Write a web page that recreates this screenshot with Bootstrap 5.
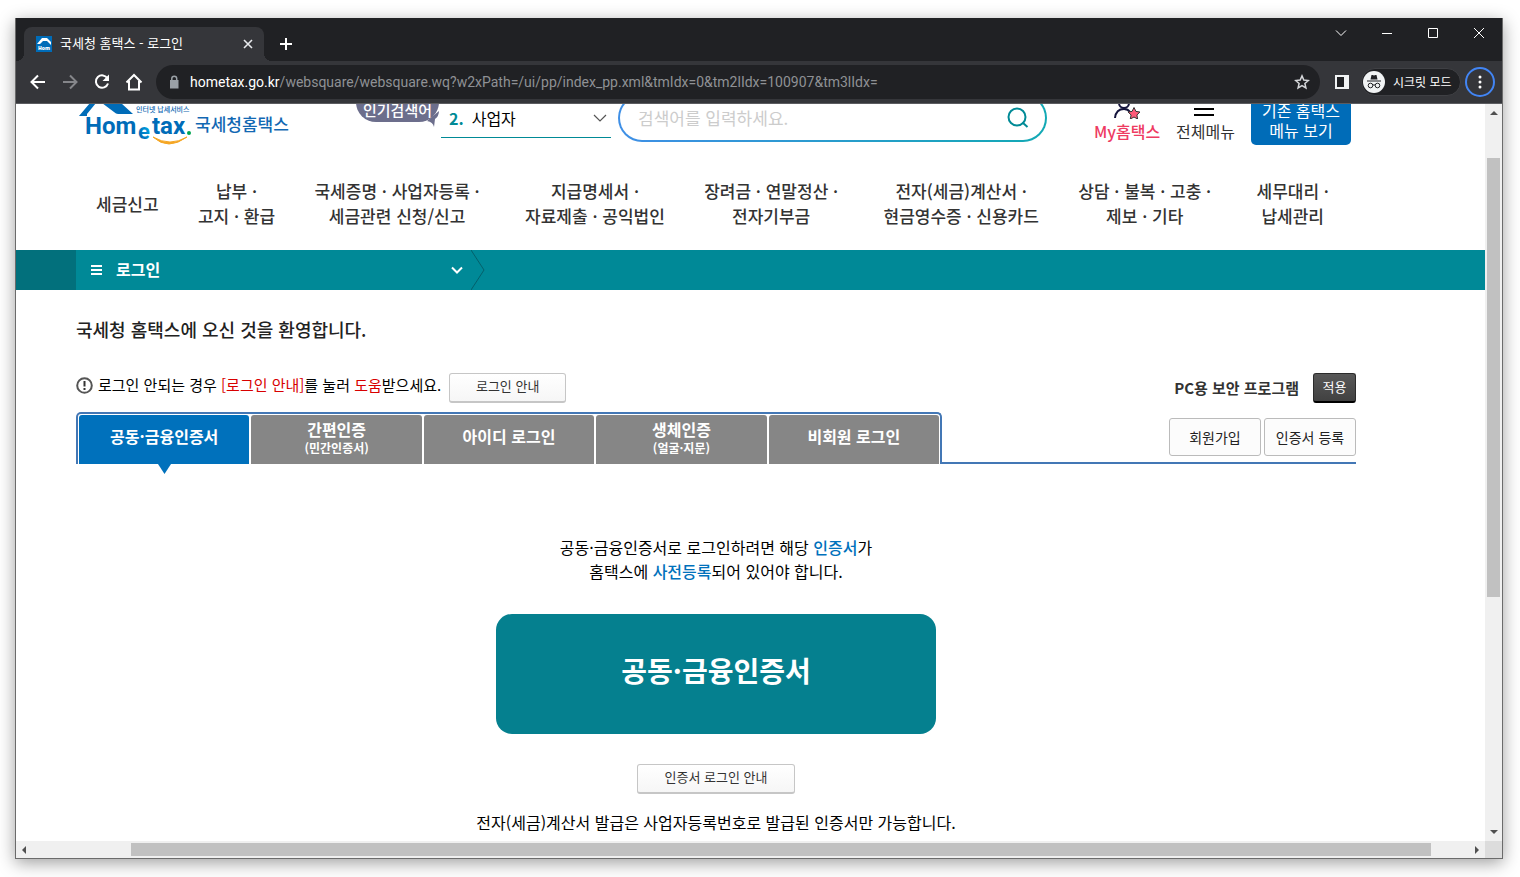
<!DOCTYPE html>
<html lang="ko">
<head>
<meta charset="utf-8">
<meta name="viewport" content="width=device-width, initial-scale=1">
<title>국세청 홈택스 - 로그인</title>
<link href="https://cdn.jsdelivr.net/npm/bootstrap@5.3.0/dist/css/bootstrap.min.css" rel="stylesheet">
<style>
  body { font-family: "Noto Sans CJK KR", "Noto Sans", sans-serif; font-size: 16px; line-height: 24px; color: #000; background: #fff; overflow: hidden; }
  button, input { font: inherit; }
  a { text-decoration: none; color: inherit; }
  svg { display: block; flex: none; }
  .desk { height: 100vh; padding: 18px 17px 18px 15px; }
  .win { border: 1px solid #6b6b6b; border-top: 0; box-shadow: 0 4px 16px rgba(0,0,0,.38); background: #fff; }
  .plain { border: 0; background: none; padding: 0; color: inherit; }

  /* browser chrome */
  .strip { background: #202124; height: 43px; padding-left: 8px; color: #fff; }
  .btab { width: 240px; height: 34px; background: #35363a; border-radius: 8px 8px 0 0; padding: 0 10px 0 12px; font-size: 13px; position: relative; }
  .btab span { padding-bottom: 2px; }
  .btab::before, .btab::after { content: ""; position: absolute; bottom: 0; width: 8px; height: 8px; }
  .btab::before { right: 100%; background: radial-gradient(circle at 0 0, #202124 8px, #35363a 8px); }
  .btab::after { left: 100%; background: radial-gradient(circle at 100% 0, #202124 8px, #35363a 8px); }
  .newtab { margin: 0 0 10px 15px; }
  .wctl { width: 46px; height: 30px; }
  .tools { background: #35363a; height: 43px; border-bottom: 1px solid #5b5c60; color: #fff; padding: 0 7px 0 12px; }
  .navbtns { gap: 12px; }
  .omni { height: 34px; background: #202124; border-radius: 17px; padding: 0 10px; }
  .url { font-family: Roboto, sans-serif; font-size: 14px; color: #8f9195; }
  .url b { font-weight: 400; color: #fff; }
  .incog { background: #202124; border: 1px solid #3f4044; border-radius: 14px; height: 28px; width: 100px; font-size: 12px; padding-left: 1px; margin-left: 12px; }
  .panel { margin-left: 15px; }
  .dots { width: 30px; height: 30px; border: 2px solid #4285f4; border-radius: 50%; }

  /* site header */
  .page { min-width: 0; overflow: hidden; background: #fff; }
  .wrap { max-width: 1340px; padding-left: 60px; }
  .top { height: 48px; padding-left: 1px; padding-right: 5px; }
  .hot { background: #6c6e8c; color: #fff; width: 83px; height: 40px; border-radius: 20px; font-weight: 500; font-size: 15px; position: relative; padding-top: 16px; margin: 0 2px 30px 65px; }
  .hot svg { position: absolute; right: 0; bottom: -5px; }
  .pick { width: 170px; height: 40px; border-bottom: 1px solid #008a96; padding: 0 4px 0 8px; margin: 0 7px 14px 0; }
  .pick b { color: #008a96; }
  .search { height: 48px; border: 2px solid transparent; border-radius: 24px; padding: 0 16px 0 18px; margin-bottom: 10px;
    background: linear-gradient(#fff,#fff) padding-box, linear-gradient(90deg,#3f8fe6,#12a9b4) border-box; }
  .search input { border: 0; outline: 0; font-size: 17px; width: 100%; padding: 0; background: none; }
  .search input::placeholder { color: #ccc; opacity: 1; }
  .my { color: #ee3b62; font-weight: 500; margin: 0 16px 9px 47px; }
  .all { color: #333; margin: 0 16px 9px 0; }
  .old { background: #006cb8; color: #fff; border-radius: 5px; width: 100px; height: 56px; line-height: 20px; padding-top: 6px; margin-bottom: 7px; }
  .gnb { font-size: 17px; line-height: 25px; font-weight: 500; color: #333; padding: 26px 27px 22px 20px; }
  .gnb a { text-align: center; white-space: nowrap; }
  .gnb a:nth-child(2n+4) { margin-left: 6px; }
  .crumb { background: #008997; color: #fff; height: 40px; }
  .crumb .edge { width: 60px; background: #02707c; }
  .crumb button { width: 395px; padding: 0 8px 0 15px; gap: 14px; font-weight: 700; }
  .crumb span { padding-bottom: 2px; }

  /* login */
  h1 { font-size: 18px; line-height: 24px; font-weight: 500; color: #222; margin: 27px 0 32px; }
  .notice { font-size: 15px; gap: 5px; padding-bottom: 6px; margin-right: 8px; }
  .red { color: #d80000; }
  .soft { height: 30px; border: 1px solid #c6c6c6; border-bottom-width: 2px; border-radius: 3px; background: linear-gradient(#fff,#f6f6f6); color: #333; font-size: 13px; line-height: 20px; padding: 0 0 3px; }
  .s1 { width: 117px; }
  .s2 { width: 158px; margin: 30px 0 16px; }
  .dark { width: 43px; height: 30px; border: 1px solid #2b2b2b; border-bottom: 2px solid #000; border-radius: 3px; background: linear-gradient(#585858,#414141); color: #fff; font-size: 13px; line-height: 20px; padding: 0 0 2px; }
  .pc { color: #333; font-size: 15px; font-weight: 700; margin-right: 14px; }
  .tabrow { padding-top: 9px; }
  .tabs { width: 866px; height: 52px; border: 2px solid #4377b5; border-bottom: 0; border-radius: 5px 5px 0 0; padding: 1px 1px 0; gap: 2px; }
  .tabs button { flex: 1 1 0; border: 0; border-radius: 3px 3px 0 0; background: #868686; color: #fff; font-weight: 700; line-height: 20px; padding: 0 0 8px; position: relative; }
  .tabs small { display: block; font-size: 12px; line-height: 17px; }
  .tabs .two { padding-bottom: 4px; }
  .tabs .on { background: #0071bc; }
  .tabs .on svg { position: absolute; left: 79px; top: 100%; }
  .side { border-bottom: 2px solid #4377b5; padding-bottom: 6px; gap: 3px; }
  .side button { width: 92px; height: 38px; border: 1px solid #bbb; border-radius: 3px; background: #fcfcfc; color: #222; font-size: 14px; padding: 0; }
  .guide { margin: 71px 0 31px; }
  .blue { color: #0071bc; font-weight: 500; }
  .bigbtn { width: 440px; height: 120px; border: 0; border-radius: 16px; background: #05808f; color: #fff; font-size: 28px; font-weight: 700; padding-bottom: 10px; }

  /* scroll bars */
  .body-row { min-height: 0; }
  .vbar { width: 17px; background: #f0f0f0; padding: 6px 2px; }
  .vbar i { width: 13px; background: #c1c1c1; margin-top: 43px; }
  .hbar { height: 17px; background: #f0f0f0; }
  .hbar i { height: 13px; background: #c1c1c1; margin-left: 103px; }
  .corner { width: 17px; background: #dcdcdc; }
</style>
</head>
<body>
<div class="desk">
<div class="win h-100 d-flex flex-column">

  <div class="strip d-flex align-items-end">
    <div class="btab d-flex align-items-center">
      <svg class="me-2" width="16" height="16" viewBox="0 0 16 16"><path fill="#006cb8" d="M0 0h16v16H0z"/><path fill="#fff" d="M1 8 6 2h5l4 4v3l-4-4H7L4 8z"/><text x="2" y="14" font-family="Open Sans, sans-serif" font-size="5" font-weight="800" fill="#fff">Hom</text></svg>
      <span class="flex-grow-1 text-nowrap">국세청 홈택스 - 로그인</span>
      <button class="plain" aria-label="탭 닫기"><svg width="12" height="12" viewBox="0 0 12 12" stroke="#e8eaed" stroke-width="1.6"><path d="m2 2 8 8M10 2l-8 8"/></svg></button>
    </div>
    <button class="plain newtab" aria-label="새 탭"><svg width="14" height="14" viewBox="0 0 14 14" stroke="#fff" stroke-width="2"><path d="M7 1v12M1 7h12"/></svg></button>
    <div class="ms-auto d-flex align-self-start" role="group">
      <button class="plain wctl d-flex align-items-center justify-content-center" aria-label="탭 검색"><svg width="12" height="12" fill="none" stroke="#fff"><path d="m1 3.500 5 5 5-5"/></svg></button>
      <button class="plain wctl d-flex align-items-center justify-content-center" aria-label="최소화"><svg width="10" height="10"><path fill="#fff" d="M0 5h10v1H0z"/></svg></button>
      <button class="plain wctl d-flex align-items-center justify-content-center" aria-label="최대화"><svg width="10" height="10" fill="none" stroke="#fff"><path d="M.5.5h9v9h-9z"/></svg></button>
      <button class="plain wctl d-flex align-items-center justify-content-center" aria-label="닫기"><svg width="10" height="10" stroke="#fff"><path d="m0 0 10 10M10 0 0 10"/></svg></button>
    </div>
  </div>

  <div class="tools d-flex align-items-center">
    <div class="navbtns d-flex me-2">
      <button class="plain" aria-label="뒤로"><svg width="20" height="20" viewBox="0 0 20 20" fill="none" stroke="#fff" stroke-width="2"><path d="M17 10H4M10 3.500 3.500 10l6.500 6.500"/></svg></button>
      <button class="plain" aria-label="앞으로"><svg width="20" height="20" viewBox="0 0 20 20" fill="none" stroke="#85868a" stroke-width="2"><path d="M3 10h13M10 3.500l6.500 6.500-6.500 6.500"/></svg></button>
      <button class="plain" aria-label="새로고침"><svg width="20" height="20" viewBox="0 0 20 20" fill="none" stroke="#fff" stroke-width="2"><path d="M15.500 6.500A6.200 6.200 0 1 0 16 11.500"/><path fill="#fff" stroke="none" d="M17 2.500V9h-6.500z"/></svg></button>
      <button class="plain" aria-label="홈"><svg width="20" height="20" viewBox="0 0 20 20" fill="none" stroke="#fff" stroke-width="2"><path d="M2.500 10.500 10 3l7.500 7.500M5 9v8.500h10V9"/></svg></button>
    </div>
    <div class="omni flex-grow-1 d-flex align-items-center ms-1">
      <svg class="me-2" width="16" height="16" viewBox="0 0 16 16"><path fill="#9aa0a6" d="M4 6h8.500v8.500H4z"/><path d="M5.800 7V4.600a2.400 2.400 0 0 1 4.900 0V7" fill="none" stroke="#9aa0a6" stroke-width="1.500"/></svg>
      <span class="url flex-grow-1 text-nowrap"><b>hometax.go.kr</b>/websquare/websquare.wq?w2xPath=/ui/pp/index_pp.xml&amp;tmIdx=0&amp;tm2lIdx=100907&amp;tm3lIdx=</span>
      <button class="plain" aria-label="북마크"><svg width="16" height="16" viewBox="0 0 16 16" fill="none" stroke="#d5d7da" stroke-width="1.500"><path d="m8 1.900 1.800 4.200 4.500.4-3.400 3 1 4.400L8 11.600l-3.900 2.300 1-4.400-3.400-3 4.500-.4z"/></svg></button>
    </div>
    <button class="plain panel" aria-label="사이드 패널"><svg width="14" height="14"><path fill="#f1f3f4" d="M0 0h14v14H0z"/><path fill="#202124" d="M2 2h7v10H2z"/></svg></button>
    <div class="incog d-flex align-items-center text-nowrap">
      <svg class="me-2" width="22" height="22" viewBox="0 0 22 22"><circle cx="11" cy="11" r="11" fill="#f1f3f4"/><path fill="#202124" d="M7.500 8.500 8.500 4h1l1.500.6 1.500-.6h1l1 4.500zM4 9.500h14v1H4z"/><g fill="none" stroke="#202124"><circle cx="7.500" cy="14.500" r="2.300"/><circle cx="14.500" cy="14.500" r="2.300"/><path d="M9.800 14.200q1.200-.8 2.400 0"/></g></svg>
      시크릿 모드
    </div>
    <button class="plain dots d-flex align-items-center justify-content-center ms-1" aria-label="메뉴"><svg width="4" height="14" fill="#fff"><circle cx="2" cy="2" r="1.500"/><circle cx="2" cy="7" r="1.500"/><circle cx="2" cy="12" r="1.500"/></svg></button>
  </div>

  <div class="body-row d-flex flex-grow-1">
    <div class="page flex-grow-1">
      <header class="wrap">
        <div class="top d-flex align-items-end">
          <a href="#" class="mb-1" aria-label="홈택스">
            <svg width="214" height="46" viewBox="0 0 214 46">
              <defs><linearGradient id="eg" x1="0" x2="1" y1="1" y2="0"><stop offset=".3" stop-color="#0071bc"/><stop offset="1" stop-color="#00b9f2"/></linearGradient></defs>
              <path fill="#006cb8" d="M2 14 13 1h6L10 12v2zM25 1h19l12 11H41q-2 0-4-2z"/>
              <g font-family="Noto Sans CJK KR, sans-serif" font-weight="500" fill="#1268b3">
                <text x="59" y="10" font-size="7">인터넷 납세서비스</text>
                <text x="118" y="29" font-size="17">국세청홈택스</text>
              </g>
              <g font-family="Roboto, sans-serif" font-weight="700" font-size="24" fill="#006cb8">
                <text x="8" y="32">Hom</text><text x="61" y="37" font-size="22" fill="url(#eg)">e</text><text x="75" y="32">tax</text>
              </g>
              <circle cx="112" cy="31" r="2" fill="#00a651"/>
              <path d="M76 35q15 14 34 0-17 10-34 0z" fill="#f5a623" stroke="#f5a623"/>
            </svg>
          </a>
          <div class="hot d-flex align-items-center justify-content-center"><span>인기검색어</span><svg width="12" height="16"><path fill="#6c6e8c" d="M0 10 12 0q0 5-4 8l-1 8q-1-5-7-6z"/></svg></div>
          <button class="plain pick d-flex align-items-center"><b class="me-2">2.</b><span class="flex-grow-1 text-start">사업자</span><svg width="14" height="10" fill="none" stroke="#555" stroke-width="1.200"><path d="m1 2 6 6 6-6"/></svg></button>
          <div class="search d-flex align-items-center flex-grow-1">
            <input type="text" aria-label="검색어" placeholder="검색어를 입력하세요.">
            <button class="plain" aria-label="검색"><svg width="22" height="22" viewBox="0 0 22 22" fill="none" stroke="#008a96" stroke-width="2"><circle cx="10" cy="10" r="8.500"/><path d="m15.500 15.500 5 4.500"/></svg></button>
          </div>
          <a href="#" class="my"><svg class="mx-auto" width="28" height="24" viewBox="0 0 28 24"><g fill="none" stroke="#14143c" stroke-width="2"><circle cx="11" cy="8" r="5"/><path d="M2 23q1-9 9-9 4 0 6 3"/></g><path transform="translate(-1 3)" fill="#ff5a78" stroke="#333" d="m22 9.500 1.900 3.900 4 .6-3 3 .7 4-3.600-2-3.700 2 .8-4-3-3 4-.6z"/></svg>My홈택스</a>
          <a href="#" class="all"><svg class="mx-auto" width="24" height="20"><path d="M0 9h20v2H0zM0 15h20v2H0z"/></svg>전체메뉴</a>
          <button class="plain old">기존 홈택스<br>메뉴 보기</button>
        </div>
        <nav class="gnb d-flex justify-content-between align-items-center">
          <a href="#">세금신고</a>
          <a href="#">납부 ·<br>고지 · 환급</a>
          <a href="#">국세증명 · 사업자등록 ·<br>세금관련 신청/신고</a>
          <a href="#">지급명세서 ·<br>자료제출 · 공익법인</a>
          <a href="#">장려금 · 연말정산 ·<br>전자기부금</a>
          <a href="#">전자(세금)계산서 ·<br>현금영수증 · 신용카드</a>
          <a href="#">상담 · 불복 · 고충 ·<br>제보 · 기타</a>
          <a href="#">세무대리 ·<br>납세관리</a>
        </nav>
      </header>

      <div class="crumb d-flex">
        <div class="edge"></div>
        <button class="plain d-flex align-items-center"><svg width="11" height="10" fill="#fff"><path d="M0 0h11v2H0zM0 4h11v2H0zM0 8h11v2H0z"/></svg><span class="flex-grow-1 text-start">로그인</span><svg width="12" height="8" fill="none" stroke="#fff" stroke-width="2"><path d="m1 1.500 5 5 5-5"/></svg></button>
        <svg width="16" height="40" fill="none" stroke="#04606b"><path d="m0 0 13 20L0 40"/></svg>
      </div>

      <main class="wrap">
        <h1>국세청 홈택스에 오신 것을 환영합니다.</h1>
        <div class="d-flex align-items-center">
          <div class="notice d-flex align-items-center text-nowrap">
            <svg width="17" height="17" viewBox="0 0 17 17"><circle cx="8.500" cy="8.500" r="7.300" fill="none" stroke="#555" stroke-width="2"/><path fill="#333" d="M7.500 4h2v5.500h-2zM7.500 11h2v2h-2z"/></svg>
            <span>로그인 안되는 경우 <span class="red">[로그인 안내]</span>를 눌러 <span class="red">도움</span>받으세요.</span>
          </div>
          <button class="soft s1">로그인 안내</button>
          <span class="pc ms-auto">PC용 보안 프로그램</span>
          <button class="dark">적용</button>
        </div>
        <div class="tabrow d-flex">
          <div class="tabs d-flex" role="tablist">
            <button class="on" role="tab" aria-selected="true">공동·금융인증서<svg width="13" height="10"><path fill="#0071bc" d="M0 0h13L6.500 10z"/></svg></button>
            <button class="two" role="tab">간편인증<small>(민간인증서)</small></button>
            <button role="tab">아이디 로그인</button>
            <button class="two" role="tab">생체인증<small>(얼굴·지문)</small></button>
            <button role="tab">비회원 로그인</button>
          </div>
          <div class="side flex-grow-1 d-flex justify-content-end align-items-end">
            <button>회원가입</button><button>인증서 등록</button>
          </div>
        </div>
        <section class="text-center d-flex flex-column align-items-center">
          <p class="guide">공동·금융인증서로 로그인하려면 해당 <span class="blue">인증서</span>가<br>홈택스에 <span class="blue">사전등록</span>되어 있어야 합니다.</p>
          <button class="bigbtn">공동·금융인증서</button>
          <button class="soft s2">인증서 로그인 안내</button>
          <p class="mb-0">전자(세금)계산서 발급은 사업자등록번호로 발급된 인증서만 가능합니다.</p>
        </section>
      </main>
    </div>
    <div class="vbar d-flex flex-column align-items-center" aria-hidden="true">
      <svg width="8" height="5" fill="#505050"><path d="M0 5 4 1l4 4z"/></svg>
      <i style="height:60.5%"></i>
      <svg class="mt-auto" width="8" height="5" fill="#505050"><path d="m0 0 4 4 4-4z"/></svg>
    </div>
  </div>
  <div class="d-flex" aria-hidden="true">
    <div class="hbar flex-grow-1 d-flex align-items-center px-1">
      <svg width="8" height="8" fill="#505050"><path d="M6 0 2 4l4 4z"/></svg>
      <i style="width:89%"></i>
      <svg class="ms-auto" width="8" height="8" fill="#505050"><path d="m2 0 4 4-4 4z"/></svg>
    </div>
    <div class="corner"></div>
  </div>
</div>
</div>
<script src="https://cdn.jsdelivr.net/npm/bootstrap@5.3.0/dist/js/bootstrap.bundle.min.js"></script>
</body>
</html>
